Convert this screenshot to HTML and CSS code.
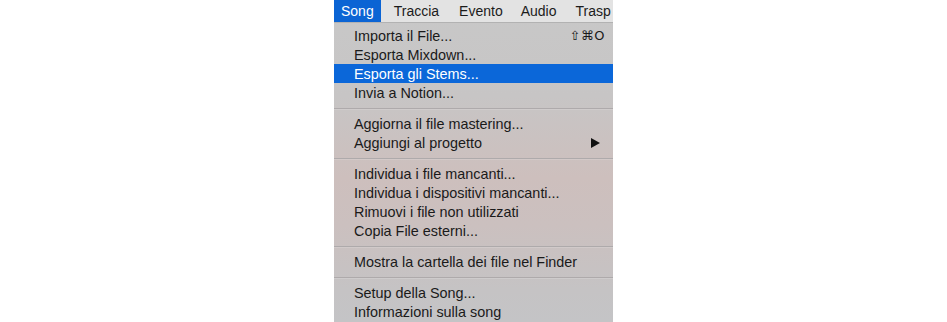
FILE: index.html
```html
<!DOCTYPE html>
<html lang="it">
  <head>
    <meta charset="utf-8" />
    <link rel="stylesheet" href="styles.css">
  </head>
  <body>
    <section class="screen">
      <nav class="menubar">
        <span class="menubar-item active">Song</span>
        <span class="menubar-item">Traccia</span>
        <span class="menubar-item">Evento</span>
        <span class="menubar-item">Audio</span>
        <span class="menubar-item">Trasp</span>
      </nav>

      <ul class="menu">
        <li class="item">Importa il File...<span class="shortcut">⇧⌘O</span></li>
        <li class="item">Esporta Mixdown...</li>
        <li class="item selected">Esporta gli Stems...</li>
        <li class="item">Invia a Notion...</li>
        <li class="sep"></li>
        <li class="item">Aggiorna il file mastering...</li>
        <li class="item">Aggiungi al progetto<span class="arrow"></span></li>
        <li class="sep"></li>
        <li class="item">Individua i file mancanti...</li>
        <li class="item">Individua i dispositivi mancanti...</li>
        <li class="item">Rimuovi i file non utilizzati</li>
        <li class="item">Copia File esterni...</li>
        <li class="sep"></li>
        <li class="item">Mostra la cartella dei file nel Finder</li>
        <li class="sep"></li>
        <li class="item">Setup della Song...</li>
        <li class="item">Informazioni sulla song</li>
      </ul>
    </section>
  </body>
</html>
```

FILE: styles.css
```css
body {
  margin: 0;
  background: white;
  font-family: "Liberation Sans", Arial, sans-serif;
  color: #1a1a1a;
}

.screen {
  width: 279px;
  height: 322px;
  margin-left: 334px;
  overflow: hidden;
  background: linear-gradient(
    #c8c8c8 0%,
    #c7c5c5 30%,
    #cdbfbd 55%,
    #cbc0bf 70%,
    #c5c3c4 90%,
    #c4c4c6 100%
  );
}

.menubar {
  display: flex;
  height: 22px;
  background: #e3e3e3;
  border-bottom: 1px solid #b2b2b2;
  font-size: 14px;
  line-height: 22px;
  white-space: nowrap;
}

.menubar-item {
  padding: 0 9px;
  color: #1b1b1b;
}

.menubar-item.active {
  padding: 0 7px;
  background: #0b64d4;
  color: white;
}

.menubar-item:nth-child(2) {
  padding-left: 13px;
}

.menubar-item:nth-child(3) {
  padding-left: 11px;
}

.menubar-item:nth-child(4) {
  padding-left: 9px;
}

.menubar-item:nth-child(5) {
  padding: 0 0 0 10px;
}

.menu {
  list-style: none;
  margin: 0;
  padding: 3px 0 0;
  font-size: 14.4px;
}

.item {
  display: flex;
  align-items: center;
  height: 19px;
  padding: 0 8px 0 20px;
  white-space: nowrap;
}

.item.selected {
  background: #0b67d9;
  color: white;
}

.shortcut {
  margin-left: auto;
  font-family: "DejaVu Sans", sans-serif;
  font-size: 13px;
  letter-spacing: 0.5px;
}

.arrow {
  margin-left: auto;
  margin-right: 5px;
  width: 0;
  height: 0;
  border-top: 5px solid transparent;
  border-bottom: 5px solid transparent;
  border-left: 9px solid #111;
}

.sep {
  height: 12px;
  display: flex;
  align-items: center;
}

.sep:before {
  content: "";
  flex: 1;
  height: 1px;
  background: #aeaaab;
  box-shadow: 0 1px 0 rgba(255, 255, 255, 0.15);
}
```
